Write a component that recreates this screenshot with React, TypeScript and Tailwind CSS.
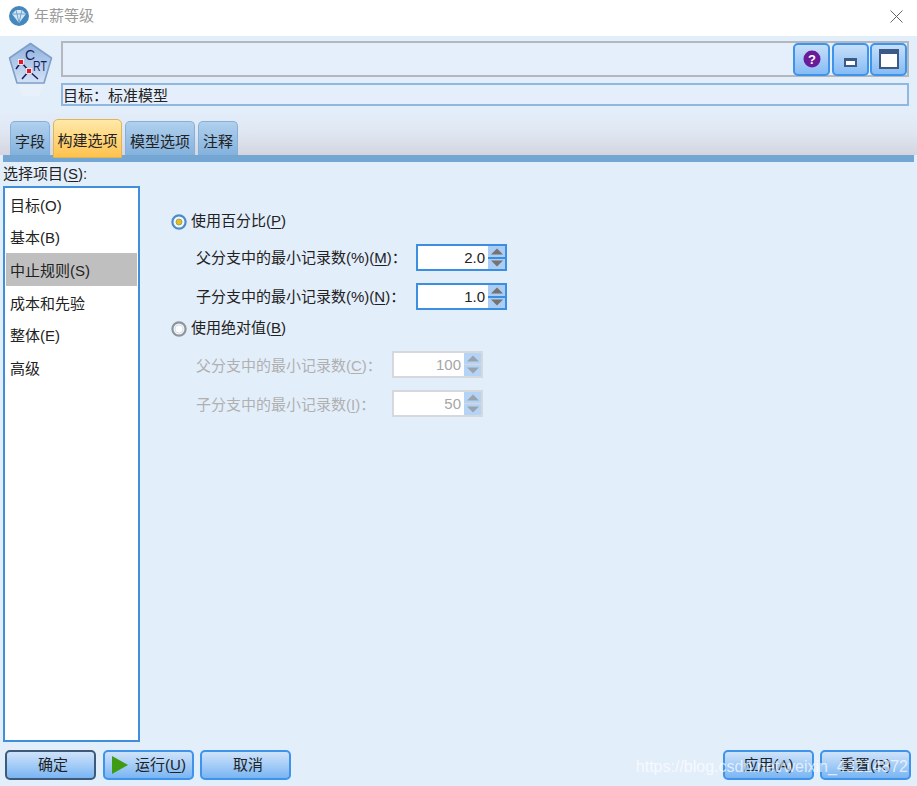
const font = { fontFamily: '"Liberation Sans", "Noto Sans CJK SC", sans-serif' };

function Mn({ children }: { children: string }) {
  return <span className="underline underline-offset-2">{children}</span>;
}

function Spin({ value, on }: { value: string; on: boolean }) {
  return (
    <div className={`flex h-[27px] w-[91px] ${on ? "border-2 border-[#3c8fe0]" : "border-2 border-[#d5d8dc]"}`}>
      <div className={`flex flex-1 items-center justify-end bg-white pr-[3px] pt-[2px] text-[15px] ${on ? "text-[#222]" : "text-[#a6a6a6]"}`}>
        {value}
      </div>
      <div className={`flex w-[17px] flex-col ${on ? "bg-[#3c8fe0] gap-[2px]" : "bg-[#d5d8dc] gap-[1px]"}`}>
        {[0, 1].map((i) => (
          <div key={i} className={`flex flex-1 items-center justify-center ${on ? "bg-[#a9cdf4]" : "bg-[#b4d3f5]"}`}>
            <svg width="14" height="7" viewBox="0 0 14 7">
              <path d={i === 0 ? "M1 6.5 H13 L7 .5Z" : "M1 .5 H13 L7 6.5Z"} fill={on ? "#77736f" : "#9aa3ad"} />
            </svg>
          </div>
        ))}
      </div>
    </div>
  );
}

function Radio({ on }: { on: boolean }) {
  return (
    <svg width="16" height="16" viewBox="0 0 16 16" className="shrink-0">
      <circle cx="8" cy="8" r="6.6" fill="#f2f7fd" stroke={on ? "#4a8cc9" : "#8f9499"} strokeWidth="2.2" />
      {on ? (
        <circle cx="8" cy="8" r="3" fill="#e8bd16" stroke="#7b8f70" strokeWidth="0.7" />
      ) : (
        <circle cx="8" cy="8" r="4" fill="#ffffff" stroke="#cfe0f2" strokeWidth="1" />
      )}
    </svg>
  );
}

function SpinRow({ label, value, on, labelW }: { label: React.ReactNode; value: string; on: boolean; labelW: number }) {
  return (
    <div className="flex h-[27px] items-center">
      <div
        style={{ width: labelW }}
        className={`pl-[25px] text-[15px] whitespace-nowrap ${on ? "pt-[2px] text-[#222]" : "pt-[4px] text-[#b0b0b0]"}`}
      >
        {label}
      </div>
      <Spin value={value} on={on} />
    </div>
  );
}

function Btn({ children, w, dark }: { children: React.ReactNode; w: string; dark?: boolean }) {
  return (
    <button
      className={`flex h-[30px] ${w} items-center justify-center rounded-[5px] border-2 bg-gradient-to-b from-[#cfe3fa] to-[#79b5f3] text-[15px] text-[#222] ${
        dark ? "border-[#3f5a78]" : "border-[#3d94ea]"
      }`}
    >
      {children}
    </button>
  );
}

function Tab({ label, active, w }: { label: string; active?: boolean; w: string }) {
  return active ? (
    <div className={`relative z-10 -mb-[3px] flex h-[39px] ${w} items-center justify-center rounded-t-[5px] border border-[#e0b555] bg-gradient-to-b from-[#ffe9a8] to-[#ffc24a] pt-[5px] text-[15px] text-[#222]`}>
      {label}
    </div>
  ) : (
    <div className={`flex h-[34px] ${w} items-end justify-center rounded-t-[5px] border border-b-0 border-[#86b0d8] bg-gradient-to-b from-[#b0d0ee] to-[#83b2dd] pb-0.5 text-[15px] text-[#222]`}>
      {label}
    </div>
  );
}

function IconBtn({ children, w }: { children: React.ReactNode; w: string }) {
  return (
    <div className={`flex h-[33px] ${w} items-center justify-center rounded-[5px] border-2 border-[#3d94ea] bg-gradient-to-b from-[#c6dff9] to-[#86bcf4]`}>
      {children}
    </div>
  );
}

export default function App() {
  const items = ["目标(O)", "基本(B)", "中止规则(S)", "成本和先验", "整体(E)", "高级"];
  return (
    <div style={font} className="relative flex h-[786px] w-[917px] flex-col overflow-hidden bg-white">
      {/* title bar */}
      <div className="flex h-[36px] shrink-0 items-center pb-[4px] pl-[9px] pr-[14px]">
        <svg width="20" height="20" viewBox="0 0 20 20">
          <circle cx="10" cy="10" r="10" fill="#4389bf" />
          <path d="M3 8 L7 4 H13 L17 8 L10 17Z" fill="#d6e6f2" />
          <path d="M3 8 H17 M7 4 L8 8 L10 17 L12 8 L13 4" stroke="#6fa4cc" strokeWidth="1" fill="none" />
        </svg>
        <span className="ml-[5px] text-[15px] text-[#9a9a9a]">年薪等级</span>
        <svg width="13" height="13" viewBox="0 0 13 13" className="ml-auto">
          <path d="M.5 .5 L12.5 12.5 M12.5 .5 L.5 12.5" stroke="#666" strokeWidth="1" />
        </svg>
      </div>

      {/* body */}
      <div className="flex min-h-0 flex-1 flex-col bg-[#e3eefb]">
        {/* header */}
        <div className="flex h-[74px] shrink-0 pt-[5px]">
          <div className="w-[61px] shrink-0 pl-[8px] pt-[1px]">
            <svg width="45" height="56" viewBox="0 0 45 56">
              <defs>
                <linearGradient id="pent" x1="0" y1="0" x2="0" y2="1">
                  <stop offset="0" stopColor="#8fb2de" />
                  <stop offset="1" stopColor="#d3e2f6" />
                </linearGradient>
              </defs>
              <path d="M22.5 1.5 L43.5 16 L36 41 H9 L1.5 16Z" fill="url(#pent)" stroke="#7e9fc9" strokeWidth="1.6" strokeLinejoin="round" />
              <path d="M8 27 L13 20 L21 29 L14 37 M21 29 L30 37" stroke="#16205e" strokeWidth="1.5" fill="none" />
              <rect x="10.5" y="17.5" width="5" height="5" fill="#e0182d" stroke="#fff" strokeWidth="0.8" />
              <rect x="18.5" y="26.5" width="5" height="5" fill="#e0182d" stroke="#fff" strokeWidth="0.8" />
              <text x="17" y="18" fontSize="14" fill="#16205e" fontFamily="Liberation Sans">C</text>
              <text x="0" y="0" fontSize="14" fill="#16205e" fontFamily="Liberation Sans" transform="translate(25 29) scale(0.75 1)">RT</text>
              <path d="M10 43 H35 L31 54 H14Z" fill="#e9f0fa" opacity="0.8" />
            </svg>
          </div>
          <div className="mr-[8px] flex min-w-0 flex-1 flex-col">
            <div className="flex h-[36px] items-center justify-end border-2 border-[#b4b8bc] bg-[#e5effb]">
              <div className="flex gap-px">
                <div className="mr-px">
                  <IconBtn w="w-[37px]">
                    <svg width="18" height="18" viewBox="0 0 18 18">
                      <circle cx="9" cy="9" r="8.5" fill="#6a1b9a" />
                      <text x="9" y="13.5" fontSize="13" fontWeight="700" textAnchor="middle" fill="#fff" fontFamily="Liberation Sans">?</text>
                    </svg>
                  </IconBtn>
                </div>
                <IconBtn w="w-[37px]">
                  <div className="mt-[6px] h-[9px] w-[13px] border-2 border-t-[3px] border-[#3b5b86] bg-white" />
                </IconBtn>
                <IconBtn w="w-[37px]">
                  <div className="h-[20px] w-[20px] border-2 border-t-[5px] border-[#3b5b86] bg-white" />
                </IconBtn>
              </div>
            </div>
            <div className="mt-[6px] flex h-[23px] items-center border-2 border-[#8fb7df] bg-[#e5effb] pt-[4px] text-[15px] text-[#222]">
              目标：标准模型
            </div>
          </div>
        </div>

        {/* tabs */}
        <div className="flex h-[45px] shrink-0 items-end gap-[3px] bg-gradient-to-b from-[#e3eefb] via-[#e0e7f2] to-[#d4d5df] pl-[10px]">
          <Tab label="字段" w="w-[40px]" />
          <Tab label="构建选项" active w="w-[69px]" />
          <Tab label="模型选项" w="w-[70px]" />
          <Tab label="注释" w="w-[40px]" />
        </div>
        <div className="mx-[3px] h-[7px] shrink-0 bg-[#74a6d3]" />

        {/* main */}
        <div className="flex min-h-0 flex-1 pl-[3px] pt-[2px]">
          <div className="flex h-[578px] w-[137px] shrink-0 flex-col">
            <div className="h-[22px] whitespace-nowrap text-[15px] leading-[20px] text-[#222]">
              选择项目(<Mn>S</Mn>):
            </div>
            <div className="flex min-h-0 flex-1 flex-col border-2 border-[#3f8fdb] bg-white px-[1px]">
              {items.map((t, i) => (
                <div
                  key={t}
                  className={`flex h-[32.7px] items-center pl-[4px] pt-[3px] text-[15px] text-[#222] ${i === 2 ? "bg-[#bfbfbf]" : ""}`}
                >
                  {t}
                </div>
              ))}
            </div>
          </div>

          <div className="flex flex-col pl-[31px] pt-[46px]">
            <div className="flex h-[23px] items-center gap-[4px] text-[15px] text-[#222]">
              <Radio on />
              <span>使用百分比(<Mn>P</Mn>)</span>
            </div>
            <div className="mt-[11px] flex flex-col gap-[12px]">
              <SpinRow on labelW={245} value="2.0" label={<>父分支中的最小记录数(%)(<Mn>M</Mn>)：</>} />
              <SpinRow on labelW={245} value="1.0" label={<>子分支中的最小记录数(%)(<Mn>N</Mn>)：</>} />
            </div>
            <div className="mt-[7px] flex h-[23px] items-center gap-[4px] text-[15px] text-[#222]">
              <Radio on={false} />
              <span>使用绝对值(<Mn>B</Mn>)</span>
            </div>
            <div className="mt-[11px] flex flex-col gap-[12px]">
              <SpinRow on={false} labelW={221} value="100" label={<>父分支中的最小记录数(<Mn>C</Mn>)：</>} />
              <SpinRow on={false} labelW={221} value="50" label={<>子分支中的最小记录数(<Mn>I</Mn>)：</>} />
            </div>
          </div>
        </div>

        {/* footer */}
        <div className="flex h-[36px] shrink-0 gap-[7px] pl-[5px] pr-[6px]">
          <Btn w="w-[91px]" dark><span className="pl-[5px]">确定</span></Btn>
          <Btn w="w-[91px]">
            <svg width="18" height="20" viewBox="0 0 18 20" className="mr-[6px]">
              <path d="M1 1 L17 10 L1 19Z" fill="#3f9a14" />
            </svg>
            运行(<Mn>U</Mn>)
          </Btn>
          <div className="-ml-px">
            <Btn w="w-[91px]"><span className="pl-[5px]">取消</span></Btn>
          </div>
          <div className="flex-1" />
          <Btn w="w-[91px]">应用(A)</Btn>
          <div className="-ml-px">
            <Btn w="w-[91px]">重置(R)</Btn>
          </div>
        </div>
      </div>

      {/* watermark */}
      <div className="absolute bottom-[8px] right-[9px] whitespace-nowrap text-[16px] leading-[22px] text-white/70">
        https://blog.csdn.net/weixin_43214872
      </div>
    </div>
  );
}
